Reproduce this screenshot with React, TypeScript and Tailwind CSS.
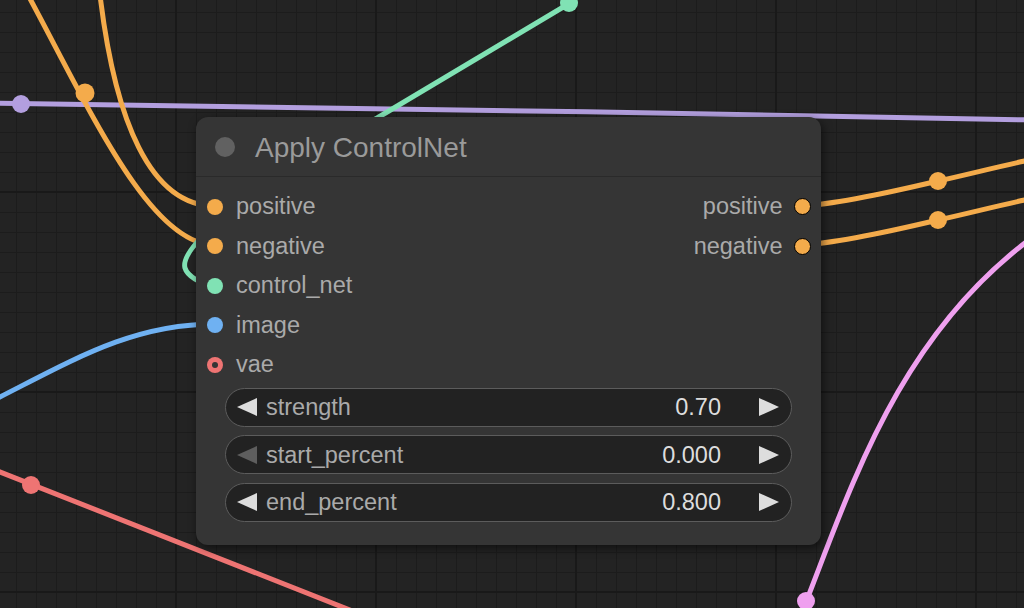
import React from "react"

const font = "font-['Liberation_Sans',Arial,Helvetica,sans-serif]"

// link colours
const ORANGE = "#f4ab4b"
const GREEN = "#80e2b4"
const BLUE = "#6fb1f2"
const RED = "#ee7473"
const PURPLE = "#b39fdf"
const PINK = "#efa0ef"

type Slot = { name: string; color: string; hollow?: boolean; output?: boolean }

const rows: { input: Slot; output?: Slot }[] = [
  { input: { name: "positive", color: ORANGE }, output: { name: "positive", color: ORANGE } },
  { input: { name: "negative", color: ORANGE }, output: { name: "negative", color: ORANGE } },
  { input: { name: "control_net", color: GREEN } },
  { input: { name: "image", color: BLUE } },
  { input: { name: "vae", color: RED, hollow: true } },
]

const widgets = [
  { label: "strength", value: "0.70", leftDisabled: false },
  { label: "start_percent", value: "0.000", leftDisabled: true },
  { label: "end_percent", value: "0.800", leftDisabled: false },
]

function SlotDot({ slot }: { slot: Slot }) {
  if (slot.hollow) {
    return (
      <div className="w-[16px] h-[16px] rounded-full flex items-center justify-center" style={{ backgroundColor: slot.color }}>
        <div className="w-[6px] h-[6px] rounded-full bg-[#353535]" />
      </div>
    )
  }
  return (
    <div
      className={`rounded-full ${slot.output ? "w-[17px] h-[17px] border-[1.5px] border-black" : "w-[16px] h-[16px]"}`}
      style={{ backgroundColor: slot.color }}
    />
  )
}

function Arrow({ dir, dim }: { dir: "left" | "right"; dim?: boolean }) {
  return (
    <svg width="20" height="18" viewBox="0 0 20 18" className="shrink-0">
      <polygon points={dir === "left" ? "20,0 20,18 0,9" : "0,0 0,18 20,9"} fill={dim ? "#5e5e5e" : "#dddddd"} />
    </svg>
  )
}

// grid + links sit on the canvas under the node
function Canvas() {
  return (
    <svg className="absolute inset-0" width="1024" height="608" viewBox="0 0 1024 608">
      <defs>
        <pattern id="minor" width="20" height="20" patternUnits="userSpaceOnUse" x="16" y="12">
          <rect x="0" y="0" width="1" height="20" fill="#1c1c1c" />
          <rect x="0" y="0" width="20" height="1" fill="#1c1c1c" />
        </pattern>
        <pattern id="major" width="200" height="200" patternUnits="userSpaceOnUse" x="175" y="191">
          <rect x="0" y="0" width="2" height="200" fill="#191919" />
          <rect x="0" y="0" width="200" height="2" fill="#191919" />
        </pattern>
      </defs>
      <rect width="1024" height="608" fill="#232323" />
      <rect width="1024" height="608" fill="url(#minor)" />
      <rect width="1024" height="608" fill="url(#major)" />

      <g fill="none" strokeWidth="5" strokeLinecap="round">
        <path d="M -10 103 C 300 106, 700 114, 1034 120" stroke={PURPLE} />
        <path d="M 28 -5 C 90 110, 150 245, 215 245" stroke={ORANGE} />
        <path d="M 100 -5 C 115 120, 150 206, 215 206" stroke={ORANGE} />
        <path d="M 570 3 L 300 164 C 230 206, 180 250, 185 268 C 187 275, 200 285, 215 285" stroke={GREEN} />
        <path d="M -10 402 C 70 362, 130 324, 215 324" stroke={BLUE} />
        <path d="M -10 468 L 360 614" stroke={RED} />
        <path d="M 802 206 C 840 204, 900 190, 938 181 C 970 174, 1000 166, 1034 159" stroke={ORANGE} />
        <path d="M 802 245 C 840 243, 900 229, 938 220 C 970 213, 1000 205, 1034 198" stroke={ORANGE} />
        <path d="M 806 602 C 850 490, 900 330, 1040 232" stroke={PINK} />
      </g>

      <circle cx="21" cy="104" r="9" fill={PURPLE} />
      <circle cx="85" cy="93" r="9.5" fill={ORANGE} />
      <circle cx="569" cy="3" r="9" fill={GREEN} />
      <circle cx="31" cy="485" r="9" fill={RED} />
      <circle cx="938" cy="181" r="9" fill={ORANGE} />
      <circle cx="938" cy="220" r="9" fill={ORANGE} />
      <circle cx="806" cy="601" r="9" fill={PINK} />
    </svg>
  )
}

export default function App() {
  return (
    <div className={`relative w-[1024px] h-[608px] overflow-hidden bg-[#232323] ${font}`}>
      <Canvas />

      {/* Apply ControlNet node */}
      <div className="absolute left-[196px] top-[117px] w-[625px] h-[428px] rounded-[12px] bg-[#353535] shadow-[2px_3px_10px_rgba(0,0,0,0.55)] flex flex-col">
        {/* Title bar */}
        <div className="h-[60px] flex items-center border-b border-[#2a2a2a] pl-[19px]">
          <div className="w-5 h-5 rounded-full bg-[#616161]" />
          <span className="ml-[20px] mt-[2px] text-[28px] leading-none text-[#9a9a9a]">Apply ControlNet</span>
        </div>

        {/* Slots */}
        <div className="pt-[10px] flex flex-col">
          {rows.map((row) => (
            <div key={row.input.name} className="h-[39.5px] flex items-center justify-between">
              <div className="flex items-center pl-[11px]">
                <SlotDot slot={row.input} />
                <span className="ml-[13px] text-[23.5px] leading-none text-[#aaaaaa]">{row.input.name}</span>
              </div>
              {row.output && (
                <div className="flex items-center pr-[10.5px]">
                  <span className="mr-[11px] text-[23.5px] leading-none text-[#aaaaaa]">{row.output.name}</span>
                  <SlotDot slot={{ ...row.output, output: true }} />
                </div>
              )}
            </div>
          ))}
        </div>

        {/* Widgets */}
        <div className="mt-[3px] px-[29px] flex flex-col gap-[8.5px]">
          {widgets.map((w) => (
            <div
              key={w.label}
              className="h-[39px] rounded-full border-[1.5px] border-[#5c5c5c] bg-[#222222] flex items-center pl-[11px] pr-[12px]"
            >
              <Arrow dir="left" dim={w.leftDisabled} />
              <span className="ml-[9px] mt-[2px] flex-1 text-[23.5px] leading-none text-[#aaaaaa]">{w.label}</span>
              <span className="mt-[2px] text-[23.5px] leading-none text-[#dddddd]">{w.value}</span>
              <div className="ml-[38px]">
                <Arrow dir="right" />
              </div>
            </div>
          ))}
        </div>
      </div>
    </div>
  )
}
